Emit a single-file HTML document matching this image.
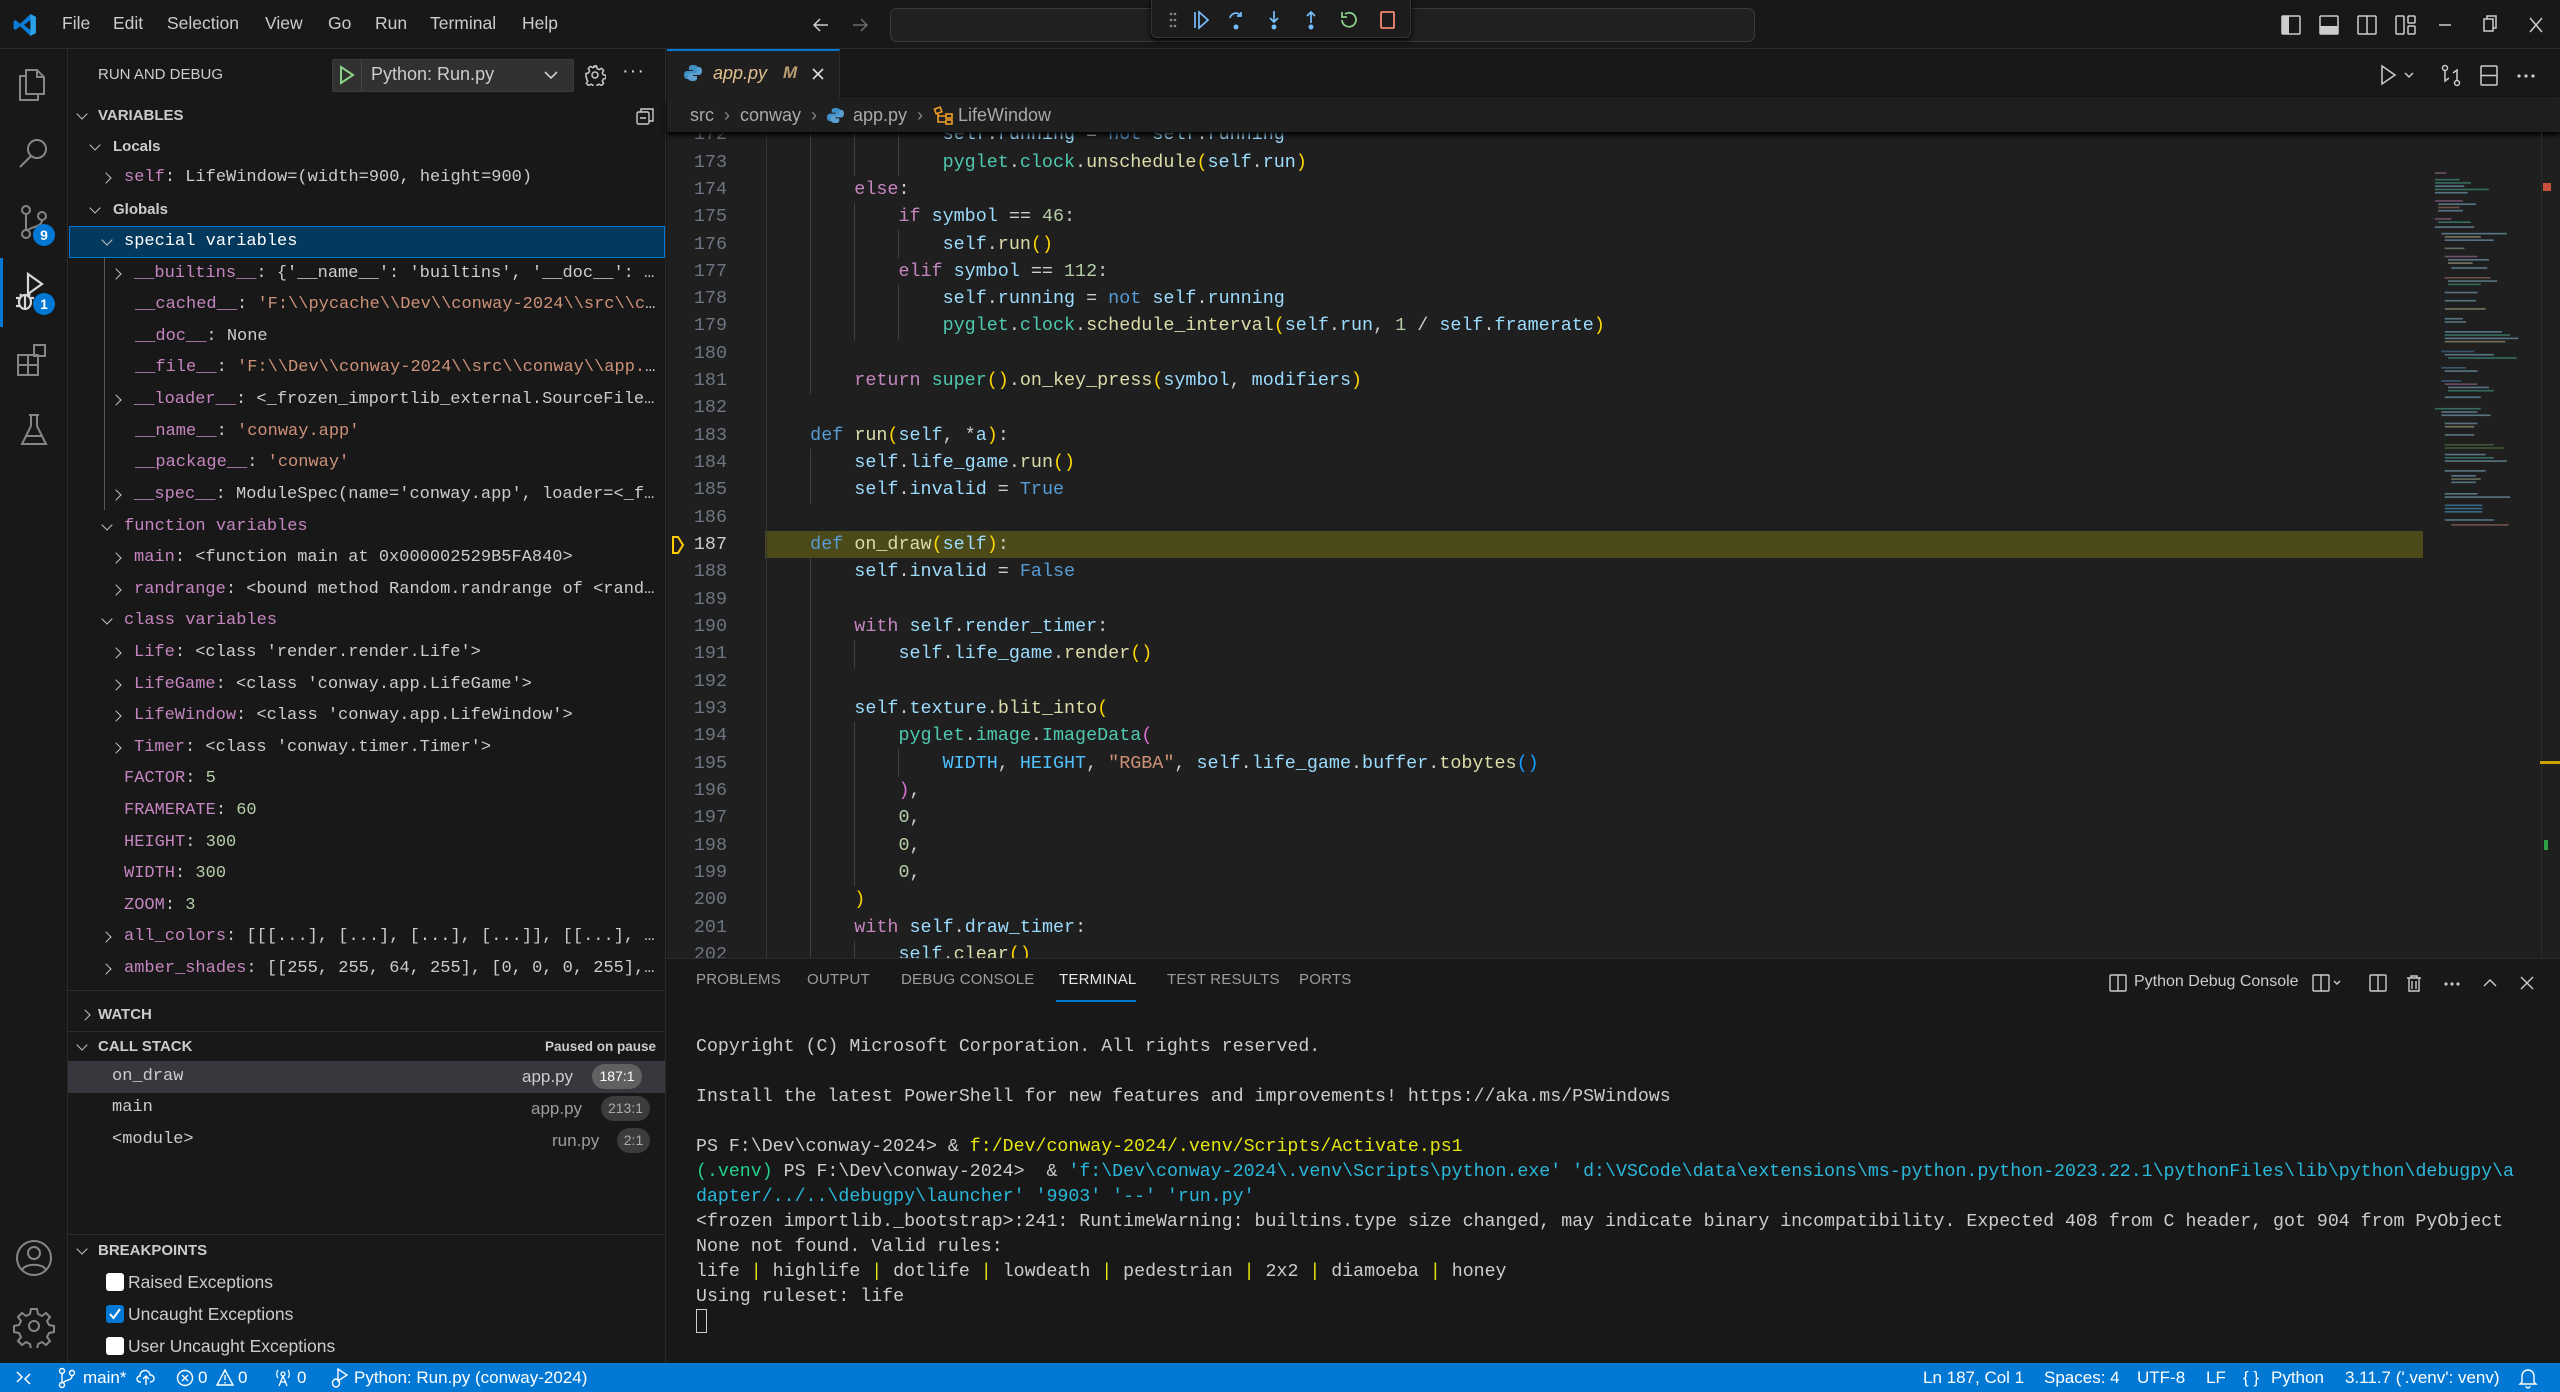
<!DOCTYPE html>
<html><head><meta charset="utf-8">
<style>
*{margin:0;padding:0;box-sizing:border-box}
body{width:2560px;height:1392px;background:#181818;overflow:hidden;position:relative;font-family:"Liberation Sans",sans-serif;color:#cccccc}
.a{position:absolute}
.ui{font-family:"Liberation Sans",sans-serif}
.mono{font-family:"Liberation Mono",monospace}
.row{position:absolute;height:32px;line-height:32px;white-space:pre;overflow:hidden;text-overflow:ellipsis;font-family:"Liberation Mono",monospace;font-size:17px;color:#cccccc}
.cr,.cd{display:inline-block;width:25px;height:32px;position:relative;vertical-align:top}
.cr.a,.cd.a{position:absolute !important}
.cr::before{content:"";position:absolute;left:3px;top:12px;width:7px;height:7px;border-right:1.6px solid #c5c5c5;border-bottom:1.6px solid #c5c5c5;transform:rotate(-45deg)}
.cd::before{content:"";position:absolute;left:4px;top:10px;width:7px;height:7px;border-right:1.6px solid #c5c5c5;border-bottom:1.6px solid #c5c5c5;transform:rotate(45deg)}
.nm{color:#c586c0}.st{color:#ce9178}.nu{color:#b5cea8}
.hdr{position:absolute;font-size:15px;font-weight:bold;color:#cccccc;height:32px;line-height:32px}
pre{font-family:"Liberation Mono",monospace}
.code{position:absolute;left:766px;top:121.2px;font-size:18.4px;line-height:27.33px;color:#cccccc;white-space:pre}
.s{color:#9cdcfe}.k{color:#c586c0}.d{color:#569cd6}.f{color:#dcdcaa}.c{color:#4ec9b0}.n{color:#b5cea8}.t{color:#ce9178}.g1{color:#ffd700}.g2{color:#da70d6}.g3{color:#179fff}.cn{color:#4fc1ff}
.term{position:absolute;left:696px;font-size:18.25px;line-height:25px;white-space:pre;color:#cccccc;font-family:"Liberation Mono",monospace}
.ty{color:#e5e510}.tg{color:#23d18b}.tb{color:#29b8db}
.ptab{position:absolute;top:971px;font-size:15px;color:#9d9d9d;letter-spacing:0.2px}
.sb{position:absolute;top:1363px;font-size:17px;color:#fff;line-height:29px;white-space:pre}
.ig{position:absolute;width:1px;background:#404040}
</style></head><body>

<!-- Title bar -->
<div class="a" style="left:0;top:0;width:2560px;height:49px;background:#181818;border-bottom:1px solid #2b2b2b"></div>
<svg class="a" style="left:12px;top:12px" width="26" height="26" viewBox="0 0 24 24"><path d="M17 2l5 2.5v15L17 22 7.5 13.2 3.2 16.5 1.5 15.7V8.3l1.7-.8L7.5 10.8 17 2zm0 5.5L11 12l6 4.5z" fill="#0a7bd6"/><path d="M17 2l5 2.5v15L17 22z" fill="#2b9fe8"/></svg>
<div class="a ui" style="top:13px;left:62px;font-size:17.5px;color:#cccccc;white-space:pre">File</div>
<div class="a ui" style="top:13px;left:113px;font-size:17.5px;color:#cccccc">Edit</div>
<div class="a ui" style="top:13px;left:167px;font-size:17.5px;color:#cccccc">Selection</div>
<div class="a ui" style="top:13px;left:265px;font-size:17.5px;color:#cccccc">View</div>
<div class="a ui" style="top:13px;left:328px;font-size:17.5px;color:#cccccc">Go</div>
<div class="a ui" style="top:13px;left:375px;font-size:17.5px;color:#cccccc">Run</div>
<div class="a ui" style="top:13px;left:430px;font-size:17.5px;color:#cccccc">Terminal</div>
<div class="a ui" style="top:13px;left:522px;font-size:17.5px;color:#cccccc">Help</div>
<svg class="a" style="left:810px;top:14px" width="22" height="22" viewBox="0 0 22 22"><path d="M18 11H4M10 5l-6 6 6 6" fill="none" stroke="#cccccc" stroke-width="1.5"/></svg>
<svg class="a" style="left:849px;top:14px" width="22" height="22" viewBox="0 0 22 22"><path d="M4 11h14M12 5l6 6-6 6" fill="none" stroke="#6b6b6b" stroke-width="1.5"/></svg>
<div class="a" style="left:890px;top:8px;width:865px;height:34px;border:1px solid #3a3a3a;border-radius:7px;background:#202020"></div>
<div class="a" style="left:1151px;top:0;width:260px;height:38px;background:#1c1c1c;border:1px solid #333;border-top:none;border-radius:0 0 6px 6px;box-shadow:0 2px 6px #000"></div>
<svg class="a" style="left:1164px;top:9px" width="240" height="22" viewBox="0 0 240 22">
<g fill="#888"><circle cx="7" cy="5" r="1.3"/><circle cx="11" cy="5" r="1.3"/><circle cx="7" cy="11" r="1.3"/><circle cx="11" cy="11" r="1.3"/><circle cx="7" cy="17" r="1.3"/><circle cx="11" cy="17" r="1.3"/></g>
<g fill="none" stroke="#75beff" stroke-width="1.7"><path d="M31 3v16M35 3l9 8-9 8z"/>
<path d="M66 9a6 6 0 0 1 11-2M77 3v4h-4"/><circle cx="72" cy="18" r="1.6" fill="#75beff"/>
<path d="M110 2v11M106 9l4 4 4-4"/><circle cx="110" cy="18" r="1.6" fill="#75beff"/>
<path d="M147 14V3M143 7l4-4 4 4"/><circle cx="147" cy="18" r="1.6" fill="#75beff"/></g>
<path d="M181 5a7 7 0 1 1-3 6M178 3v5h5" fill="none" stroke="#89d185" stroke-width="1.8"/>
<rect x="217" y="3" width="13" height="16" rx="1" fill="none" stroke="#f48771" stroke-width="1.8"/>
</svg>
<svg class="a" style="left:2280px;top:13px" width="280" height="24" viewBox="0 0 280 24">
<g fill="none" stroke="#cccccc" stroke-width="1.5"><rect x="2" y="3" width="18" height="18" rx="1"/><rect x="40" y="3" width="18" height="18" rx="1"/><rect x="78" y="3" width="18" height="18" rx="1"/><line x1="87" y1="3" x2="87" y2="21"/><rect x="116" y="3" width="8" height="18" rx="1"/><rect x="128" y="3" width="7" height="7" rx="1"/><rect x="128" y="13" width="7" height="8" rx="1"/>
<line x1="159" y1="12" x2="171" y2="12"/><rect x="204" y="6" width="9" height="12"/><path d="M207 6V3h9v12h-3"/><path d="M250 5l12 14M262 5l-12 14"/></g>
<rect x="2" y="3" width="7" height="18" fill="#cccccc"/><rect x="40" y="13" width="18" height="8" fill="#cccccc"/>
</svg>

<!-- Activity bar -->
<div class="a" style="left:0;top:49px;width:68px;height:1314px;background:#181818;border-right:1px solid #2b2b2b"></div>
<div class="a" style="left:0;top:258px;width:3px;height:69px;background:#0078d4"></div>
<svg class="a" style="left:14px;top:64px" width="40" height="40" viewBox="0 0 40 40" fill="none" stroke="#868686" stroke-width="2"><path d="M12 6h11l7 7v17H12z"/><path d="M23 6v7h7"/><path d="M12 12H6v24h18v-6"/></svg>
<svg class="a" style="left:14px;top:134px" width="40" height="40" viewBox="0 0 40 40" fill="none" stroke="#868686" stroke-width="2"><circle cx="23" cy="15" r="9"/><path d="M17 22L6 33"/></svg>
<svg class="a" style="left:14px;top:202px" width="40" height="40" viewBox="0 0 40 40" fill="none" stroke="#868686" stroke-width="2"><circle cx="12" cy="8" r="4"/><circle cx="12" cy="32" r="4"/><circle cx="28" cy="14" r="4"/><path d="M12 12v16M28 18c0 8-12 6-15 11"/></svg>
<div class="a ui" style="left:33px;top:224px;width:22px;height:22px;border-radius:11px;background:#0078d4;color:#fff;font-size:14px;font-weight:bold;text-align:center;line-height:22px">9</div>
<svg class="a" style="left:12px;top:270px" width="40" height="44" viewBox="0 0 40 44" fill="none" stroke="#d7d7d7" stroke-width="2.2"><path d="M16 4v20l14-10z"/><ellipse cx="13" cy="32" rx="6" ry="7"/><path d="M4 28h4M4 36h4M18 28h4M8 24l2 3M16 27l2-3M13 26v13"/></svg>
<div class="a ui" style="left:33px;top:293px;width:22px;height:22px;border-radius:11px;background:#0078d4;color:#fff;font-size:14px;font-weight:bold;text-align:center;line-height:22px">1</div>
<svg class="a" style="left:14px;top:341px" width="40" height="40" viewBox="0 0 40 40" fill="none" stroke="#868686" stroke-width="2"><rect x="4" y="14" width="10" height="10"/><rect x="4" y="24" width="10" height="10"/><rect x="14" y="24" width="10" height="10"/><rect x="20" y="4" width="11" height="11"/><path d="M14 14h10v10"/></svg>
<svg class="a" style="left:14px;top:410px" width="40" height="40" viewBox="0 0 40 40" fill="none" stroke="#868686" stroke-width="2"><path d="M15 5h10M17 5v11L8 34h24L23 16V5M12 26h16"/></svg>
<svg class="a" style="left:12px;top:1236px" width="44" height="44" viewBox="0 0 44 44" fill="none" stroke="#868686" stroke-width="2"><circle cx="22" cy="22" r="17"/><circle cx="22" cy="17" r="6"/><path d="M10 34c3-7 21-7 24 0"/></svg>
<svg class="a" style="left:12px;top:1304px" width="44" height="44" viewBox="0 0 44 44" fill="none" stroke="#868686" stroke-width="2"><circle cx="22" cy="22" r="5"/><path d="M19 5h6l1 5 4 2 4-3 4 4-3 4 2 4 5 1v6l-5 1-2 4 3 4-4 4-4-3-4 2-1 5h-6l-1-5-4-2-4 3-4-4 3-4-2-4-5-1v-6l5-1 2-4-3-4 4-4 4 3 4-2z"/></svg>

<!-- Sidebar -->
<div class="a" style="left:68px;top:49px;width:598px;height:1314px;background:#181818;border-right:1px solid #2b2b2b"></div>
<div class="a ui" style="left:98px;top:66px;font-size:15px;color:#cccccc">RUN AND DEBUG</div>
<div class="a" style="left:332px;top:59px;width:242px;height:33px;background:#313131;border:1px solid #3c3c3c;border-radius:2px"></div>
<div class="a" style="left:361px;top:60px;width:1px;height:31px;background:#454545"></div>
<svg class="a" style="left:338px;top:65px" width="18" height="20" viewBox="0 0 18 20"><path d="M3 2l12 8-12 8z" fill="none" stroke="#89d185" stroke-width="2"/></svg>
<div class="a ui" style="left:371px;top:64px;font-size:18px;color:#cccccc">Python: Run.py</div>
<svg class="a" style="left:543px;top:68px" width="16" height="14" viewBox="0 0 16 14"><path d="M2 4l6 6 6-6" fill="none" stroke="#ccc" stroke-width="1.6"/></svg>
<svg class="a" style="left:584px;top:64px" width="22" height="22" viewBox="0 0 22 22" fill="none" stroke="#ccc" stroke-width="1.5"><circle cx="11" cy="11" r="3"/><path d="M9.5 2h3l.6 2.6 2 1 2.4-1.3 2.1 2.1-1.3 2.4 1 2 2.6.6v3l-2.6.6-1 2 1.3 2.4-2.1 2.1-2.4-1.3-2 1-.6 2.6h-3l-.6-2.6-2-1-2.4 1.3-2.1-2.1 1.3-2.4-1-2L2 12.5v-3l2.6-.6 1-2-1.3-2.4 2.1-2.1 2.4 1.3 2-1z"/></svg>
<div class="a" style="left:622px;top:60px;font-size:20px;color:#ccc;letter-spacing:1px">···</div>

<span class="cd a" style="left:74px;top:100px"></span>
<div class="hdr" style="left:98px;top:100px">VARIABLES</div>
<svg class="a" style="left:634px;top:105px" width="22" height="22" viewBox="0 0 22 22" fill="none" stroke="#ccc" stroke-width="1.4"><rect x="3" y="7" width="12" height="12" rx="1.5"/><path d="M7 7V4h12v12h-4M6 13h6"/></svg>

<div class="a" style="left:68px;top:132px;width:598px;height:858px;overflow:hidden">
<div style="position:absolute;left:-68px;top:-132px;width:680px;height:1000px">
<span class="cd a" style="left:87px;top:131px"></span><div class="hdr" style="left:113px;top:131px;font-size:15px">Locals</div>
<div class="row" style="top:162px;left:99px;width:561px"><span class="cr"></span><span class="nm">self</span>: LifeWindow=(width=900, height=900)</div>
<span class="cd a" style="left:87px;top:194px"></span><div class="hdr" style="left:113px;top:194px">Globals</div>
<div class="a" style="left:69px;top:226px;width:596px;height:32px;background:#04395e;border:1px solid #0078d4"></div>
<div class="row" style="top:226px;left:99px;width:561px;color:#fff"><span class="cd"></span>special variables</div>
<div class="ig" style="left:104px;top:258px;height:252px;background:#585858"></div>
<div class="row" style="top:258px;left:109px;width:551px"><span class="cr"></span><span class="nm">__builtins__</span>: {'__name__': 'builtins', '__doc__': "Built-in functions"}</div>
<div class="row" style="top:289px;left:135px;width:525px"><span class="nm">__cached__</span>: <span class="st">'F:\\pycache\\Dev\\conway-2024\\src\\conway\\app.cpython'</span></div>
<div class="row" style="top:321px;left:135px;width:525px"><span class="nm">__doc__</span>: None</div>
<div class="row" style="top:352px;left:135px;width:525px"><span class="nm">__file__</span>: <span class="st">'F:\\Dev\\conway-2024\\src\\conway\\app.py'</span></div>
<div class="row" style="top:384px;left:109px;width:551px"><span class="cr"></span><span class="nm">__loader__</span>: &lt;_frozen_importlib_external.SourceFileLoader object&gt;</div>
<div class="row" style="top:416px;left:135px;width:525px"><span class="nm">__name__</span>: <span class="st">'conway.app'</span></div>
<div class="row" style="top:447px;left:135px;width:525px"><span class="nm">__package__</span>: <span class="st">'conway'</span></div>
<div class="row" style="top:479px;left:109px;width:551px"><span class="cr"></span><span class="nm">__spec__</span>: ModuleSpec(name='conway.app', loader=&lt;_frozen&gt;)</div>
<div class="row" style="top:511px;left:99px;width:561px"><span class="cd"></span><span class="nm">function variables</span></div>
<div class="row" style="top:542px;left:109px;width:551px"><span class="cr"></span><span class="nm">main</span>: &lt;function main at 0x000002529B5FA840&gt;</div>
<div class="row" style="top:574px;left:109px;width:551px"><span class="cr"></span><span class="nm">randrange</span>: &lt;bound method Random.randrange of &lt;random.Random&gt;&gt;</div>
<div class="row" style="top:605px;left:99px;width:561px"><span class="cd"></span><span class="nm">class variables</span></div>
<div class="row" style="top:637px;left:109px;width:551px"><span class="cr"></span><span class="nm">Life</span>: &lt;class 'render.render.Life'&gt;</div>
<div class="row" style="top:669px;left:109px;width:551px"><span class="cr"></span><span class="nm">LifeGame</span>: &lt;class 'conway.app.LifeGame'&gt;</div>
<div class="row" style="top:700px;left:109px;width:551px"><span class="cr"></span><span class="nm">LifeWindow</span>: &lt;class 'conway.app.LifeWindow'&gt;</div>
<div class="row" style="top:732px;left:109px;width:551px"><span class="cr"></span><span class="nm">Timer</span>: &lt;class 'conway.timer.Timer'&gt;</div>
<div class="row" style="top:763px;left:124px;width:536px"><span class="nm">FACTOR</span>: <span class="nu">5</span></div>
<div class="row" style="top:795px;left:124px;width:536px"><span class="nm">FRAMERATE</span>: <span class="nu">60</span></div>
<div class="row" style="top:827px;left:124px;width:536px"><span class="nm">HEIGHT</span>: <span class="nu">300</span></div>
<div class="row" style="top:858px;left:124px;width:536px"><span class="nm">WIDTH</span>: <span class="nu">300</span></div>
<div class="row" style="top:890px;left:124px;width:536px"><span class="nm">ZOOM</span>: <span class="nu">3</span></div>
<div class="row" style="top:921px;left:99px;width:561px"><span class="cr"></span><span class="nm">all_colors</span>: [[[...], [...], [...], [...]], [[...], [...]]]</div>
<div class="row" style="top:953px;left:99px;width:561px"><span class="cr"></span><span class="nm">amber_shades</span>: [[255, 255, 64, 255], [0, 0, 0, 255], [1]]</div>
<div class="row" style="top:984px;left:99px;width:561px"><span class="cr"></span><span class="nm">choice</span>: &lt;bound method Random.choice of &lt;built-in&gt;&gt;</div>
</div></div>

<div class="a" style="left:68px;top:990px;width:598px;height:1px;background:#2b2b2b"></div>
<span class="cr a" style="left:78px;top:999px"></span><div class="hdr" style="left:98px;top:999px">WATCH</div>
<div class="a" style="left:68px;top:1031px;width:598px;height:1px;background:#2b2b2b"></div>
<span class="cd a" style="left:74px;top:1031px"></span><div class="hdr" style="left:98px;top:1031px">CALL STACK</div>
<div class="a ui" style="left:545px;top:1039px;font-size:13.5px;font-weight:bold;color:#cccccc">Paused on pause</div>
<div class="a" style="left:68px;top:1061px;width:597px;height:32px;background:#37373d"></div>
<div class="row" style="left:112px;top:1061px">on_draw</div>
<div class="a ui" style="left:522px;top:1067px;font-size:17px;color:#cccccc">app.py</div>
<div class="a ui" style="left:592px;top:1064px;width:50px;height:25px;border-radius:13px;background:#616161;color:#fff;font-size:14px;text-align:center;line-height:25px">187:1</div>
<div class="row" style="left:112px;top:1092px">main</div>
<div class="a ui" style="left:531px;top:1099px;font-size:17px;color:#9d9d9d">app.py</div>
<div class="a ui" style="left:601px;top:1096px;width:49px;height:25px;border-radius:13px;background:#3c3c3c;color:#aaa;font-size:14px;text-align:center;line-height:25px">213:1</div>
<div class="row" style="left:112px;top:1124px">&lt;module&gt;</div>
<div class="a ui" style="left:552px;top:1131px;font-size:17px;color:#9d9d9d">run.py</div>
<div class="a ui" style="left:617px;top:1128px;width:33px;height:25px;border-radius:13px;background:#3c3c3c;color:#aaa;font-size:14px;text-align:center;line-height:25px">2:1</div>
<div class="a" style="left:68px;top:1234px;width:598px;height:1px;background:#2b2b2b"></div>
<span class="cd a" style="left:74px;top:1235px"></span><div class="hdr" style="left:98px;top:1235px">BREAKPOINTS</div>
<div class="a" style="left:106px;top:1273px;width:18px;height:18px;border-radius:3px;background:#fff"></div>
<div class="a ui" style="left:128px;top:1272px;font-size:17.5px;color:#cccccc">Raised Exceptions</div>
<div class="a" style="left:106px;top:1305px;width:18px;height:18px;border-radius:3px;background:#0078d4"></div>
<svg class="a" style="left:106px;top:1305px" width="18" height="18" viewBox="0 0 18 18"><path d="M4 9l3.5 4L14 4" fill="none" stroke="#fff" stroke-width="2"/></svg>
<div class="a ui" style="left:128px;top:1304px;font-size:17.5px;color:#cccccc">Uncaught Exceptions</div>
<div class="a" style="left:106px;top:1337px;width:18px;height:18px;border-radius:3px;background:#fff"></div>
<div class="a ui" style="left:128px;top:1336px;font-size:17.5px;color:#cccccc">User Uncaught Exceptions</div>

<!-- Editor -->
<div class="a" style="left:667px;top:49px;width:1893px;height:50px;background:#181818;border-bottom:1px solid #2b2b2b"></div>
<div class="a" style="left:667px;top:49px;width:173px;height:51px;background:#1f1f1f;border-top:2px solid #0078d4;border-right:1px solid #2b2b2b"></div>
<svg class="a" style="left:684px;top:64px" width="18" height="18" viewBox="0 0 18 18"><path d="M9 1c-4 0-4 2-4 3v2h4v1H3c-2 0-3 2-3 4s1 4 3 4h2v-3c0-2 1-3 3-3h4c1 0 2-1 2-2V4c0-2-2-3-5-3z" fill="#3d8fc6"/><path d="M9 17c4 0 4-2 4-3v-2H9v-1h6c2 0 3-2 3-4s-1-4-3-4h-2v3c0 2-1 3-3 3H6c-1 0-2 1-2 2v3c0 2 2 3 5 3z" fill="#5a9fd0"/></svg>
<div class="a ui" style="left:713px;top:63px;font-size:18px;font-style:italic;color:#e2c08d">app.py</div>
<div class="a ui" style="left:783px;top:63px;font-size:17px;font-style:italic;font-weight:bold;color:#b89d6e">M</div>
<svg class="a" style="left:810px;top:66px" width="16" height="16" viewBox="0 0 16 16"><path d="M3 3l10 10M13 3L3 13" stroke="#ddd" stroke-width="1.6"/></svg>
<svg class="a" style="left:2378px;top:63px" width="170" height="24" viewBox="0 0 170 24" fill="none" stroke="#cccccc" stroke-width="1.5"><path d="M4 3l13 9-13 9z"/><path d="M27 10l4 4 4-4"/><circle cx="67" cy="5" r="2.5"/><circle cx="79" cy="20" r="2.5"/><path d="M67 8v10l4-3M79 17V7l-4 3"/><rect x="103" y="3" width="16" height="19" rx="1"/><line x1="103" y1="12.5" x2="119" y2="12.5"/><g fill="#ccc" stroke="none"><circle cx="141" cy="13" r="1.6"/><circle cx="148" cy="13" r="1.6"/><circle cx="155" cy="13" r="1.6"/></g></svg>

<div class="a" style="left:667px;top:100px;width:1893px;height:858px;background:#1f1f1f"></div>
<div class="a" style="left:667px;top:132px;width:1893px;height:826px;overflow:hidden">
<div style="position:absolute;left:-667px;top:-132px;width:2560px;height:1000px">
<div class="a" style="left:765px;top:531px;width:1658px;height:27.3px;background:#4b4a18"></div>
<div class="ig" style="left:766px;top:121px;height:840px;background:#333"></div>
<div class="ig" style="left:810px;top:121px;height:273px"></div>
<div class="ig" style="left:810px;top:449px;height:55px"></div>
<div class="ig" style="left:810px;top:558px;height:410px"></div>
<div class="ig" style="left:854px;top:121px;height:55px"></div>
<div class="ig" style="left:854px;top:203px;height:137px"></div>
<div class="ig" style="left:854px;top:640px;height:28px"></div>
<div class="ig" style="left:854px;top:722px;height:164px"></div>
<div class="ig" style="left:854px;top:941px;height:28px"></div>
<div class="ig" style="left:898px;top:121px;height:55px"></div>
<div class="ig" style="left:898px;top:230px;height:28px"></div>
<div class="ig" style="left:898px;top:285px;height:55px"></div>
<div class="ig" style="left:898px;top:749px;height:28px"></div>
<pre class="a" style="left:680px;top:121.2px;width:47px;text-align:right;font-size:18.4px;line-height:27.33px;color:#6e7681">172
173
174
175
176
177
178
179
180
181
182
183
184
185
186
<span style="color:#cccccc">187</span>
188
189
190
191
192
193
194
195
196
197
198
199
200
201
202</pre>
<svg class="a" style="left:671px;top:535px" width="14" height="20" viewBox="0 0 14 20"><path d="M2 2h5l5 8-5 8H2z" fill="none" stroke="#ffcc00" stroke-width="2"/></svg>
<pre class="code">                <span class="s">self</span>.<span class="s">running</span> = <span class="d">not</span> <span class="s">self</span>.<span class="s">running</span>
                <span class="c">pyglet</span>.<span class="c">clock</span>.<span class="f">unschedule</span><span class="g1">(</span><span class="s">self</span>.<span class="s">run</span><span class="g1">)</span>
        <span class="k">else</span>:
            <span class="k">if</span> <span class="s">symbol</span> == <span class="n">46</span>:
                <span class="s">self</span>.<span class="f">run</span><span class="g1">()</span>
            <span class="k">elif</span> <span class="s">symbol</span> == <span class="n">112</span>:
                <span class="s">self</span>.<span class="s">running</span> = <span class="d">not</span> <span class="s">self</span>.<span class="s">running</span>
                <span class="c">pyglet</span>.<span class="c">clock</span>.<span class="f">schedule_interval</span><span class="g1">(</span><span class="s">self</span>.<span class="s">run</span>, <span class="n">1</span> / <span class="s">self</span>.<span class="s">framerate</span><span class="g1">)</span>

        <span class="k">return</span> <span class="c">super</span><span class="g1">()</span>.<span class="f">on_key_press</span><span class="g1">(</span><span class="s">symbol</span>, <span class="s">modifiers</span><span class="g1">)</span>

    <span class="d">def</span> <span class="f">run</span><span class="g1">(</span><span class="s">self</span>, *<span class="s">a</span><span class="g1">)</span>:
        <span class="s">self</span>.<span class="s">life_game</span>.<span class="f">run</span><span class="g1">()</span>
        <span class="s">self</span>.<span class="s">invalid</span> = <span class="d">True</span>

    <span class="d">def</span> <span class="f">on_draw</span><span class="g1">(</span><span class="s">self</span><span class="g1">)</span>:
        <span class="s">self</span>.<span class="s">invalid</span> = <span class="d">False</span>

        <span class="k">with</span> <span class="s">self</span>.<span class="s">render_timer</span>:
            <span class="s">self</span>.<span class="s">life_game</span>.<span class="f">render</span><span class="g1">()</span>

        <span class="s">self</span>.<span class="s">texture</span>.<span class="f">blit_into</span><span class="g1">(</span>
            <span class="c">pyglet</span>.<span class="c">image</span>.<span class="c">ImageData</span><span class="g2">(</span>
                <span class="cn">WIDTH</span>, <span class="cn">HEIGHT</span>, <span class="t">"RGBA"</span>, <span class="s">self</span>.<span class="s">life_game</span>.<span class="s">buffer</span>.<span class="f">tobytes</span><span class="g3">()</span>
            <span class="g2">)</span>,
            <span class="n">0</span>,
            <span class="n">0</span>,
            <span class="n">0</span>,
        <span class="g1">)</span>
        <span class="k">with</span> <span class="s">self</span>.<span class="s">draw_timer</span>:
            <span class="s">self</span>.<span class="f">clear</span><span class="g1">()</span></pre>
</div></div>
<div class="a" style="left:667px;top:100px;width:1893px;height:32px;background:#1f1f1f;box-shadow:0 3px 5px #000"></div>
<div class="a ui" style="left:690px;top:105px;font-size:18px;color:#a9a9a9;white-space:pre">src  <span style="color:#888">›</span>  conway  <span style="color:#888">›</span></div>
<svg class="a" style="left:827px;top:107px" width="17" height="17" viewBox="0 0 18 18"><path d="M9 1c-4 0-4 2-4 3v2h4v1H3c-2 0-3 2-3 4s1 4 3 4h2v-3c0-2 1-3 3-3h4c1 0 2-1 2-2V4c0-2-2-3-5-3z" fill="#3d8fc6"/><path d="M9 17c4 0 4-2 4-3v-2H9v-1h6c2 0 3-2 3-4s-1-4-3-4h-2v3c0 2-1 3-3 3H6c-1 0-2 1-2 2v3c0 2 2 3 5 3z" fill="#5a9fd0"/></svg>
<div class="a ui" style="left:853px;top:105px;font-size:18px;color:#a9a9a9;white-space:pre">app.py  <span style="color:#888">›</span></div>
<svg class="a" style="left:933px;top:106px" width="22" height="20" viewBox="0 0 22 20" fill="none" stroke="#ee9d28" stroke-width="1.6"><rect x="2" y="2" width="6" height="5" transform="rotate(-20 5 4)"/><rect x="13" y="8" width="6" height="4"/><rect x="13" y="14" width="6" height="4"/><path d="M5 7v9h8M5 10h8"/></svg>
<div class="a ui" style="left:958px;top:105px;font-size:18px;color:#a9a9a9">LifeWindow</div>
<!-- minimap -->
<svg class="a" style="left:2430px;top:134px" width="90" height="430" viewBox="0 0 110 440">
<g opacity="0.45">
<rect x="6" y="4" width="14" height="2" fill="#c586c0"/><rect x="6" y="12" width="30" height="2" fill="#4ec9b0"/><rect x="6" y="16" width="44" height="2" fill="#4ec9b0"/><rect x="6" y="20" width="36" height="2" fill="#9cdcfe"/><rect x="6" y="24" width="66" height="2" fill="#4ec9b0"/><rect x="6" y="28" width="40" height="2" fill="#9cdcfe"/>
<rect x="6" y="38" width="34" height="2" fill="#c586c0"/><rect x="10" y="42" width="46" height="2" fill="#9cdcfe"/><rect x="10" y="46" width="26" height="2" fill="#ce9178"/><rect x="10" y="50" width="30" height="2" fill="#9cdcfe"/>
<rect x="6" y="60" width="20" height="2" fill="#c586c0"/><rect x="10" y="64" width="40" height="2" fill="#4ec9b0"/><rect x="6" y="70" width="48" height="2" fill="#9cdcfe"/>
<rect x="14" y="78" width="80" height="2" fill="#9cdcfe"/><rect x="18" y="82" width="44" height="2" fill="#dcdcaa"/><rect x="18" y="86" width="60" height="2" fill="#9cdcfe"/><rect x="18" y="96" width="24" height="2" fill="#b5cea8"/>
<rect x="18" y="106" width="40" height="2" fill="#c586c0"/><rect x="22" y="110" width="50" height="2" fill="#9cdcfe"/><rect x="22" y="114" width="30" height="2" fill="#dcdcaa"/><rect x="26" y="120" width="44" height="2" fill="#9cdcfe"/>
<rect x="18" y="132" width="56" height="2" fill="#ce9178"/><rect x="22" y="136" width="60" height="2" fill="#9cdcfe"/><rect x="22" y="140" width="40" height="2" fill="#4ec9b0"/>
<rect x="18" y="150" width="40" height="2" fill="#9cdcfe"/><rect x="18" y="160" width="38" height="2" fill="#9cdcfe"/><rect x="18" y="170" width="50" height="2" fill="#dcdcaa"/>
<rect x="18" y="182" width="22" height="2" fill="#9cdcfe"/><rect x="18" y="186" width="26" height="2" fill="#9cdcfe"/>
<rect x="18" y="198" width="70" height="2" fill="#9cdcfe"/><rect x="18" y="202" width="80" height="2" fill="#4ec9b0"/><rect x="18" y="206" width="90" height="2" fill="#9cdcfe"/><rect x="18" y="210" width="74" height="2" fill="#dcdcaa"/>
<rect x="14" y="222" width="40" height="2" fill="#569cd6"/><rect x="18" y="226" width="60" height="2" fill="#9cdcfe"/><rect x="22" y="230" width="84" height="2" fill="#4ec9b0"/>
<rect x="14" y="242" width="30" height="2" fill="#569cd6"/><rect x="18" y="246" width="40" height="2" fill="#9cdcfe"/>
<rect x="14" y="258" width="24" height="2" fill="#569cd6"/><rect x="18" y="262" width="40" height="2" fill="#c586c0"/><rect x="22" y="266" width="50" height="2" fill="#9cdcfe"/><rect x="22" y="270" width="56" height="2" fill="#4ec9b0"/><rect x="18" y="278" width="44" height="2" fill="#9cdcfe"/>
<rect x="6" y="292" width="56" height="2" fill="#4ec9b0"/><rect x="14" y="296" width="44" height="2" fill="#9cdcfe"/><rect x="14" y="300" width="60" height="2" fill="#9cdcfe"/>
<rect x="18" y="310" width="40" height="2" fill="#9cdcfe"/><rect x="18" y="314" width="36" height="2" fill="#dcdcaa"/><rect x="18" y="324" width="36" height="2" fill="#9cdcfe"/>
<rect x="18" y="336" width="60" height="2" fill="#6a9955"/><rect x="18" y="340" width="72" height="2" fill="#6a9955"/><rect x="18" y="348" width="50" height="2" fill="#9cdcfe"/><rect x="18" y="352" width="60" height="2" fill="#4ec9b0"/><rect x="18" y="356" width="76" height="2" fill="#9cdcfe"/>
<rect x="18" y="368" width="50" height="2" fill="#9cdcfe"/><rect x="26" y="374" width="30" height="2" fill="#9cdcfe"/><rect x="26" y="378" width="36" height="2" fill="#b5cea8"/><rect x="26" y="382" width="30" height="2" fill="#9cdcfe"/>
<rect x="18" y="396" width="40" height="2" fill="#9cdcfe"/><rect x="18" y="400" width="80" height="2" fill="#9cdcfe"/><rect x="18" y="410" width="46" height="2" fill="#4fc1ff"/><rect x="18" y="414" width="46" height="2" fill="#4fc1ff"/><rect x="18" y="418" width="46" height="2" fill="#4fc1ff"/><rect x="18" y="428" width="60" height="2" fill="#9cdcfe"/><rect x="26" y="434" width="70" height="2" fill="#ce9178"/>
</g></svg>
<div class="a" style="left:2541px;top:132px;width:1px;height:826px;background:#2b2b2b"></div>
<div class="a" style="left:2543px;top:183px;width:8px;height:8px;background:#c74e39"></div>
<div class="a" style="left:2540px;top:761px;width:20px;height:3px;background:#c9a300"></div>
<div class="a" style="left:2544px;top:840px;width:4px;height:10px;background:#2ea043"></div>

<!-- Panel -->
<div class="a" style="left:667px;top:958px;width:1893px;height:405px;background:#181818;border-top:1px solid #2b2b2b"></div>
<div class="ptab" style="left:696px">PROBLEMS</div>
<div class="ptab" style="left:807px">OUTPUT</div>
<div class="ptab" style="left:901px">DEBUG CONSOLE</div>
<div class="ptab" style="left:1059px;color:#e7e7e7">TERMINAL</div>
<div class="ptab" style="left:1167px">TEST RESULTS</div>
<div class="ptab" style="left:1299px">PORTS</div>
<div class="a" style="left:1056px;top:1000px;width:80px;height:2px;background:#0078d4"></div>
<svg class="a" style="left:2108px;top:973px" width="20" height="20" viewBox="0 0 20 20" fill="none" stroke="#ccc" stroke-width="1.4"><rect x="2" y="2" width="16" height="16" rx="1"/><line x1="10" y1="2" x2="10" y2="18"/></svg>
<div class="a ui" style="left:2134px;top:973px;font-size:16px;color:#cccccc">Python Debug Console</div>
<svg class="a" style="left:2312px;top:973px" width="240" height="20" viewBox="0 0 240 20" fill="none" stroke="#ccc" stroke-width="1.4"><rect x="1" y="2" width="16" height="16" rx="1"/><line x1="9" y1="2" x2="9" y2="18"/><path d="M22 8l3 3 3-3"/><rect x="58" y="2" width="16" height="16" rx="1"/><line x1="66" y1="2" x2="66" y2="18"/><path d="M95 5h14M99 5V3h6v2M97 5v13h10V5M100 8v8M104 8v8"/><g fill="#ccc" stroke="none"><circle cx="134" cy="11" r="1.6"/><circle cx="140" cy="11" r="1.6"/><circle cx="146" cy="11" r="1.6"/></g><path d="M172 13l6-6 6 6"/><path d="M209 4l12 12M221 4L209 16"/></svg>

<div class="term" style="top:1034.5px">Copyright (C) Microsoft Corporation. All rights reserved.</div>
<div class="term" style="top:1084.5px">Install the latest PowerShell for new features and improvements! https://aka.ms/PSWindows</div>
<div class="term" style="top:1134.5px">PS F:\Dev\conway-2024&gt; &amp; <span class="ty">f:/Dev/conway-2024/.venv/Scripts/Activate.ps1</span></div>
<div class="term" style="top:1159.5px"><span class="tg">(.venv)</span> PS F:\Dev\conway-2024&gt;  &amp; <span class="tb">'f:\Dev\conway-2024\.venv\Scripts\python.exe' 'd:\VSCode\data\extensions\ms-python.python-2023.22.1\pythonFiles\lib\python\debugpy\a</span></div>
<div class="term" style="top:1184.5px"><span class="tb">dapter/../..\debugpy\launcher' '9903' '--' 'run.py'</span></div>
<div class="term" style="top:1209.5px">&lt;frozen importlib._bootstrap&gt;:241: RuntimeWarning: builtins.type size changed, may indicate binary incompatibility. Expected 408 from C header, got 904 from PyObject</div>
<div class="term" style="top:1234.5px">None not found. Valid rules:</div>
<div class="term" style="top:1259.5px">life <span class="ty">|</span> highlife <span class="ty">|</span> dotlife <span class="ty">|</span> lowdeath <span class="ty">|</span> pedestrian <span class="ty">|</span> 2x2 <span class="ty">|</span> diamoeba <span class="ty">|</span> honey</div>
<div class="term" style="top:1284.5px">Using ruleset: life</div>
<div class="a" style="left:696px;top:1309px;width:11px;height:24px;border:1.5px solid #cccccc"></div>

<!-- Status bar -->
<div class="a" style="left:0;top:1363px;width:2560px;height:29px;background:#0078d4"></div>
<svg class="a" style="left:14px;top:1369px" width="20" height="18" viewBox="0 0 20 18" fill="none" stroke="#fff" stroke-width="1.5"><path d="M3 3l5 5-5 5M16 5l-5 5 5 5"/></svg>
<svg class="a" style="left:57px;top:1367px" width="20" height="22" viewBox="0 0 20 22" fill="none" stroke="#fff" stroke-width="1.4"><circle cx="5" cy="4" r="2.5"/><circle cx="5" cy="18" r="2.5"/><circle cx="15" cy="6" r="2.5"/><path d="M5 7v8M15 9c0 5-8 4-9 7"/></svg>
<div class="sb ui" style="left:83px">main*</div>
<svg class="a" style="left:136px;top:1368px" width="20" height="18" viewBox="0 0 20 18" fill="none" stroke="#fff" stroke-width="1.4"><path d="M5 14H4a3 3 0 0 1 0-6 5 5 0 0 1 10-1 3.5 3.5 0 0 1 1 7h-1M10 8v9M7 11l3-3 3 3"/></svg>
<svg class="a" style="left:176px;top:1369px" width="18" height="18" viewBox="0 0 18 18" fill="none" stroke="#fff" stroke-width="1.4"><circle cx="9" cy="9" r="7.5"/><path d="M6 6l6 6M12 6l-6 6"/></svg>
<div class="sb ui" style="left:198px">0</div>
<svg class="a" style="left:215px;top:1368px" width="20" height="19" viewBox="0 0 20 19" fill="none" stroke="#fff" stroke-width="1.4"><path d="M10 2l8 15H2zM10 7v5M10 14v1.5"/></svg>
<div class="sb ui" style="left:238px">0</div>
<svg class="a" style="left:273px;top:1367px" width="20" height="20" viewBox="0 0 20 20" fill="none" stroke="#fff" stroke-width="1.3"><circle cx="10" cy="7" r="2"/><path d="M10 9l-4 10M10 9l4 10M7 15h6M5 3a7 7 0 0 0 0 8M15 3a7 7 0 0 1 0 8"/></svg>
<div class="sb ui" style="left:297px">0</div>
<svg class="a" style="left:330px;top:1367px" width="20" height="22" viewBox="0 0 20 22" fill="none" stroke="#fff" stroke-width="1.4"><path d="M8 2v12l9-6z"/><ellipse cx="6" cy="16" rx="3.5" ry="4"/></svg>
<div class="sb ui" style="left:354px">Python: Run.py (conway-2024)</div>
<div class="sb ui" style="left:1923px">Ln 187, Col 1</div>
<div class="sb ui" style="left:2044px">Spaces: 4</div>
<div class="sb ui" style="left:2137px">UTF-8</div>
<div class="sb ui" style="left:2206px">LF</div>
<div class="sb ui" style="left:2243px">{ }</div>
<div class="sb ui" style="left:2271px">Python</div>
<div class="sb ui" style="left:2345px">3.11.7 ('.venv': venv)</div>
<svg class="a" style="left:2518px;top:1367px" width="20" height="22" viewBox="0 0 20 22" fill="none" stroke="#fff" stroke-width="1.4"><path d="M4 15V9a6 6 0 0 1 12 0v6l2 2H2zM8 19a2 2 0 0 0 4 0"/></svg>
</body></html>
